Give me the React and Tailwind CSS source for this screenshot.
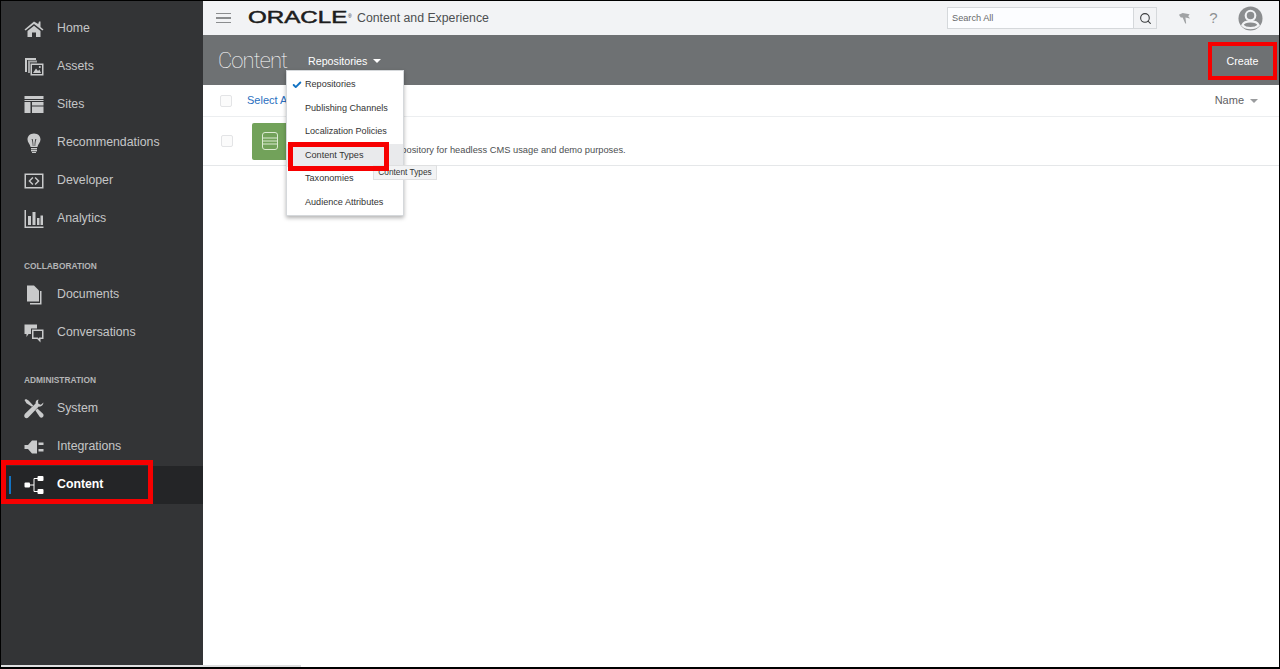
import React from 'react';
import { Check, Search } from 'lucide-react';

const ICON = 'w-[20px] h-[20px] fill-[#c9cacb]';

const HomeIcon = () => (
  <svg viewBox="0 0 20 20" className={ICON}>
    <path d="M10 2.5 0.5 10.5 1.6 11.5 10 5 18.4 11.5 19.5 10.5 16.5 8 V2.5 H15 L14.2 5 Z" />
    <path d="M3.5 12 10 6.8 16.5 12 V18 H12 V13.5 H8 V18 H3.5 Z" />
  </svg>
);

const AssetsIcon = () => (
  <svg viewBox="0 0 20 20" className={ICON}>
    <path d="M1 1 H12 V3 H3 V15 H1 Z" />
    <path d="M4 3.6 H13 V5.5 H6 V16 H4 Z" opacity="0.75" />
    <path fillRule="evenodd" d="M6.5 6.5 H19.5 V18.5 H6.5 Z M8 8 V17 H18 V8 Z" />
    <path d="M9 16 12 11.5 14 14 15.4 12.6 17 16 Z" />
    <circle cx="15.8" cy="10" r="1" />
  </svg>
);

const SitesIcon = () => (
  <svg viewBox="0 0 20 20" className={ICON}>
    <rect x="0.5" y="1" width="19" height="3" />
    <rect x="0.5" y="5" width="19" height="1" />
    <rect x="0.5" y="7" width="6" height="11" />
    <rect x="8" y="7" width="11.5" height="3.5" />
    <rect x="8" y="11.5" width="11.5" height="6.5" />
  </svg>
);

const BulbIcon = () => (
  <svg viewBox="0 0 20 20" className={ICON}>
    <path fillRule="evenodd" d="M10 0.5 C5.8 0.5 3.5 3.4 3.5 6.6 C3.5 9.8 6 11 6.6 14 H13.4 C14 11 16.5 9.8 16.5 6.6 C16.5 3.4 14.2 0.5 10 0.5 Z M7.6 6.2 C8.8 5.6 9.2 6.6 9.4 13 H8.8 C8.6 9.5 8.4 8 7.6 6.2 Z M12.4 6.2 C11.2 5.6 10.8 6.6 10.6 13 H11.2 C11.4 9.5 11.6 8 12.4 6.2 Z" />
    <rect x="7" y="15" width="6" height="1.4" />
    <rect x="7" y="17" width="6" height="1.4" />
    <rect x="8" y="19" width="4" height="1" />
  </svg>
);

const DeveloperIcon = () => (
  <svg viewBox="0 0 20 20" className={ICON}>
    <path fillRule="evenodd" d="M0.5 2.5 H19.5 V17.5 H0.5 Z M2 4 V16 H18 V4 Z" />
    <path d="M8.4 6 9.4 7 6.4 10 9.4 13 8.4 14 4.4 10 Z" />
    <path d="M11.6 6 10.6 7 13.6 10 10.6 13 11.6 14 15.6 10 Z" />
  </svg>
);

const AnalyticsIcon = () => (
  <svg viewBox="0 0 20 20" className={ICON}>
    <path d="M0.5 1 H2 V17.5 H19.5 V19 H0.5 Z" />
    <rect x="4" y="7" width="3" height="9" />
    <rect x="8.5" y="3" width="3" height="13" />
    <rect x="13" y="9" width="2.5" height="7" />
    <rect x="16.5" y="6.5" width="2.5" height="9.5" />
  </svg>
);

const DocumentsIcon = () => (
  <svg viewBox="0 0 20 20" className={ICON}>
    <path d="M3 0.5 H10 L15 5.5 V16.5 H3 Z" />
    <path d="M16 6 H17.5 V19.5 H6 V18 H16 Z" />
  </svg>
);

const ConversationsIcon = () => (
  <svg viewBox="0 0 20 20" className={ICON}>
    <path d="M0.5 1.5 H13 V5.5 H7 V11 H4.5 L2.5 14 V11 H0.5 Z" />
    <path fillRule="evenodd" d="M8 6.5 H19.5 V16 H16.5 V19.5 L13.2 16 H8 Z M9.5 8 V14.5 H13.8 L15 15.8 V14.5 H18 V8 Z" />
  </svg>
);

const SystemIcon = () => (
  <svg viewBox="0 0 20 20" className={ICON}>
    <path d="M0.5 1 2 0 4.8 1.8 9.2 6.6 8 7.8 2.4 4.2 Z" />
    <path d="M14.5 0.5 C12.5 0.8 11.4 2.4 11.6 4.4 L1 14.8 C0 15.8 0 17.6 0.9 18.6 C1.8 19.5 3.4 19.4 4.2 18.6 L14.8 7.6 C17 8 19.2 6.5 19.5 3.6 L16.8 5.8 14.4 4.8 14 2.6 Z" />
    <path d="M11.4 11.4 13.4 9.4 19 14.8 C19.8 15.8 19.8 17 18.9 18 C18 18.9 16.7 18.9 15.8 18 Z" />
  </svg>
);

const PlugIcon = () => (
  <svg viewBox="0 0 20 20" className={ICON}>
    <path d="M0.5 8 H4 L8 3.5 H13 V16.5 H8 L4 12 H0.5 Z" />
    <rect x="14.5" y="5.5" width="5" height="2.5" />
    <rect x="14.5" y="12" width="5" height="2.5" />
  </svg>
);

const ContentIcon = () => (
  <svg viewBox="0 0 20 20" className="w-[20px] h-[20px]">
    <rect x="0.5" y="7.5" width="5.5" height="5" rx="1" fill="#fff" />
    <rect x="13.5" y="1" width="6" height="5" rx="1" fill="#fff" />
    <rect x="13.5" y="14" width="6" height="5" rx="1" fill="#fff" />
    <path d="M6 10 H10 V3.5 H14 M10 10 V16.5 H14" stroke="#fff" strokeWidth="1" fill="none" />
  </svg>
);

const topItems = [
  { label: 'Home', icon: HomeIcon },
  { label: 'Assets', icon: AssetsIcon },
  { label: 'Sites', icon: SitesIcon },
  { label: 'Recommendations', icon: BulbIcon },
  { label: 'Developer', icon: DeveloperIcon },
  { label: 'Analytics', icon: AnalyticsIcon },
];

const collabItems = [
  { label: 'Documents', icon: DocumentsIcon },
  { label: 'Conversations', icon: ConversationsIcon },
];

const adminItems = [
  { label: 'System', icon: SystemIcon },
  { label: 'Integrations', icon: PlugIcon },
];

const menuItems = ['Repositories', 'Publishing Channels', 'Localization Policies', 'Content Types', 'Taxonomies', 'Audience Attributes'];

const NavItem = ({ label, icon: Icon }) => (
  <div className="h-[38px] flex items-center pl-[23px] text-[12.3px] text-[#c5c6c7]">
    <span className="w-[20px] flex justify-center mr-[13px]">
      <Icon />
    </span>
    <span className="pb-[2px]">{label}</span>
  </div>
);

const NavLabel = ({ children, className }) => (
  <div className={`pl-[23px] h-[19px] flex items-center text-[8.4px] font-bold text-[#b4b5b6] ${className}`}>{children}</div>
);

const Sidebar = () => (
  <aside className="w-[202px] shrink-0 bg-[#333436] pt-[9px] mb-[1px]">
    {topItems.map((item) => <NavItem key={item.label} {...item} />)}
    <NavLabel className="mt-[19px]">COLLABORATION</NavLabel>
    {collabItems.map((item) => <NavItem key={item.label} {...item} />)}
    <NavLabel className="mt-[19px]">ADMINISTRATION</NavLabel>
    {adminItems.map((item) => <NavItem key={item.label} {...item} />)}
    <div className="relative h-[38px] flex items-center pl-[23px] bg-[#242527] text-[12.3px] font-bold text-white">
      <span className="absolute left-[8px] top-[10px] w-[2px] h-[18px] bg-[#1273c4]" />
      <span className="w-[20px] flex justify-center mr-[13px]">
        <ContentIcon />
      </span>
      <span className="pb-[2px]">Content</span>
      {/* red callout */}
      <span className="absolute left-0 top-[-6px] w-[152px] h-[44px] border-[5px] border-[#f70000]" />
    </div>
  </aside>
);

const TopBar = () => (
  <header className="h-[34px] shrink-0 bg-[#f2f3f5] flex items-center pl-[13px] pr-[16px]">
    <div className="w-[15px] flex flex-col gap-[3px] mr-[17px]">
      <span className="h-[1.5px] bg-[#8b8d8f]" />
      <span className="h-[1.5px] bg-[#8b8d8f]" />
      <span className="h-[1.5px] bg-[#8b8d8f]" />
    </div>
    <span className="relative w-[109px] text-[17px] leading-[20px] text-[#1d1d1d] [-webkit-text-stroke:0.5px_#1d1d1d]">
      <span className="inline-block origin-left scale-x-[1.42]">ORACLE</span>
      <span className="absolute left-[100px] top-[-2px] text-[5px] [-webkit-text-stroke:0]">®</span>
    </span>
    <span className="text-[12.3px] text-[#4d4f51]">Content and Experience</span>
    <div className="ml-auto flex items-center">
      <div className="w-[210px] h-[22px] flex border border-[#d5d8db] bg-[#fcfdff]">
        <span className="flex-1 pl-[4px] text-[9.2px] leading-[20px] text-[#66686a]">Search All</span>
        <span className="w-[23px] flex items-center justify-center border-l border-[#d5d8db] bg-[#f2f3f5]">
          <Search size={13} strokeWidth={2} className="text-[#3b3d3f]" />
        </span>
      </div>
      <svg viewBox="0 0 14 14" className="w-[13px] h-[13px] ml-[21px] fill-[#a0a2a4]">
        <path d="M1 3 L5 1 L12.5 2.5 L11 4.5 13 7 L8 6 L8.8 12.5 H7.8 L5 6 L3 6 Z" />
      </svg>
      <span className="ml-[16px] w-[13px] text-center text-[15px] text-[#8e9092]">?</span>
      <svg viewBox="0 0 26 26" className="w-[25px] h-[25px] ml-[18px]">
        <circle cx="13" cy="13" r="12.5" fill="#8b8d8f" />
        <circle cx="13" cy="10" r="5" fill="none" stroke="#f2f3f5" strokeWidth="2.2" />
        <path d="M4.5 20 C6 16.5 9 16 13 16 C17 16 20 16.5 21.5 20 C19.5 22 16.5 23 13 23 C9.5 23 6.5 22 4.5 20 Z" fill="none" stroke="#f2f3f5" strokeWidth="2.2" />
      </svg>
    </div>
  </header>
);

const PageHeader = () => (
  <div className="h-[50px] shrink-0 bg-[#6e7173] flex items-center pl-[15px] pr-[2px]">
    <span className="w-[69px] whitespace-nowrap text-[22px] tracking-[-0.9px] [font-family:'Roboto',sans-serif] font-thin text-white mr-[21px]">Content</span>
    <span className="mt-[2px] text-[10.7px] text-white flex items-center">
      Repositories
      <span className="ml-[6px] mt-[1px] w-0 h-0 border-x-[4px] border-x-transparent border-t-[4px] border-t-white" />
    </span>
    <button className="ml-auto mt-[1px] w-[69px] h-[38px] border-[4px] border-[#f70000] pt-[1px] text-[10.7px] text-white">Create</button>
  </div>
);

const Dropdown = () => (
  <div className="absolute left-[83px] top-[69px] w-[118px] pt-[2px] bg-white border border-[#d5d8db] shadow-[0_2px_4px_rgba(0,0,0,0.3)] z-10">
    {menuItems.map((name, i) => (
      <div key={name} className={`relative h-[23.6px] flex items-center pl-[18px] text-[9.1px] text-[#333] ${i === 3 ? 'bg-[#e9eaec]' : ''}`}>
        {i === 0 && <Check size={10} strokeWidth={4.5} className="absolute left-[5px] top-[7px] text-[#1273c4]" />}
        {name}
        {i === 3 && (
          <>
            <span className="absolute left-[86px] top-[21px] w-[64px] h-[15px] flex items-center justify-center bg-[#f2f3f4] border border-[#dfe0e1] text-[8.3px] text-[#333] whitespace-nowrap">Content Types</span>
            <span className="absolute left-[1px] top-[-2px] w-[101px] h-[29px] border-[5px] border-[#f70000]" />
          </>
        )}
      </div>
    ))}
  </div>
);

const ContentList = () => (
  <div className="flex-1 relative">
    <div className="h-[32px] flex items-center border-b border-[#eceef0] pl-[17px] pr-[21px]">
      <span className="w-[12px] h-[12px] rounded-[2px] border border-[#e3e4e6] bg-[#fbfbfb]" />
      <span className="ml-[15px] text-[11px] text-[#2a6fc0]">Select All</span>
      <span className="ml-auto text-[11px] text-[#5f6163] flex items-center">
        Name
        <span className="ml-[6px] w-0 h-0 border-x-[4px] border-x-transparent border-t-[4px] border-t-[#9a9c9e]" />
      </span>
    </div>
    <div className="h-[49px] flex items-center border-b border-[#e5e7e9] pl-[18px]">
      <span className="w-[12px] h-[12px] rounded-[2px] border border-[#e3e4e6] bg-[#fbfbfb]" />
      <span className="ml-[19px] w-[36px] h-[37px] rounded-[2px] bg-[#72a25a] flex items-center justify-center">
        <svg viewBox="0 0 16 18" className="w-[16px] h-[18px]" fill="none" stroke="#dcebd2" strokeWidth="1">
          <rect x="0.5" y="0.5" width="15" height="17" rx="2.5" />
          <path d="M0.5 6 H15.5 M0.5 9 H15.5 M0.5 12 H15.5" />
        </svg>
      </span>
      <span className="ml-[71px] mt-[19px] text-[9.3px] text-[#4d4f51]">Sample repository for headless CMS usage and demo purposes.</span>
    </div>
  </div>
);

export default function App() {
  return (
    <div className="relative w-[1280px] h-[669px] border border-black border-b-[2px] flex overflow-hidden bg-white [font-family:'Liberation_Sans',Arial,sans-serif]">
      <Sidebar />
      <main className="relative flex-1 flex flex-col min-w-0">
        <TopBar />
        <PageHeader />
        <ContentList />
        <Dropdown />
      </main>
      {/* page scrollbar along the bottom edge */}
      <span className="absolute left-0 bottom-0 w-[300px] h-[2px] bg-[#dedfe0]" />
    </div>
  );
}
